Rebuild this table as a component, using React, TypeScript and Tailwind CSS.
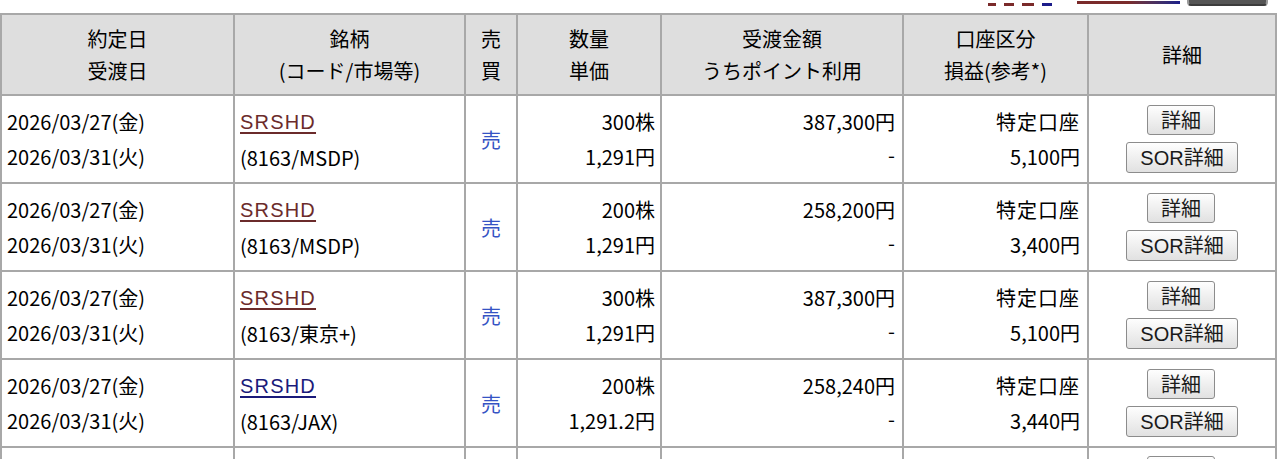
import React from 'react';

type Trade = {
  tradeDate: string;
  settleDate: string;
  name: string;
  visited: boolean;
  code: string;
  side: string;
  qty: string;
  price: string;
  amount: string;
  points: string;
  account: string;
  profit: string;
};

const TRADES: Trade[] = [
  { tradeDate: '2026/03/27(金)', settleDate: '2026/03/31(火)', name: 'SRSHD', visited: true, code: '(8163/MSDP)', side: '売', qty: '300株', price: '1,291円', amount: '387,300円', points: '-', account: '特定口座', profit: '5,100円' },
  { tradeDate: '2026/03/27(金)', settleDate: '2026/03/31(火)', name: 'SRSHD', visited: true, code: '(8163/MSDP)', side: '売', qty: '200株', price: '1,291円', amount: '258,200円', points: '-', account: '特定口座', profit: '3,400円' },
  { tradeDate: '2026/03/27(金)', settleDate: '2026/03/31(火)', name: 'SRSHD', visited: true, code: '(8163/東京+)', side: '売', qty: '300株', price: '1,291円', amount: '387,300円', points: '-', account: '特定口座', profit: '5,100円' },
  { tradeDate: '2026/03/27(金)', settleDate: '2026/03/31(火)', name: 'SRSHD', visited: false, code: '(8163/JAX)', side: '売', qty: '200株', price: '1,291.2円', amount: '258,240円', points: '-', account: '特定口座', profit: '3,440円' },
];

const cell = 'border-2 border-[#a8a8a8] align-middle';
const btn =
  'block mx-auto rounded-[3px] border border-[#8c8c8c] bg-gradient-to-b from-[#fefefe] to-[#e1e1e1] px-[13px] text-[20px] leading-none text-[#1a1a1a]';

const Buttons = () => (
  <div className="flex flex-col items-center gap-[7px]">
    <button className={`${btn} h-[30px] -translate-x-[1px]`}>詳細</button>
    <button className={`${btn} h-[31px] px-[12px]`}>
      <span className="font-['Liberation_Sans',sans-serif]">SOR</span>詳細
    </button>
  </div>
);

export default function App() {
  return (
    <div className="w-[1280px] h-[459px] overflow-hidden bg-white text-black font-['Noto_Sans_CJK_JP',sans-serif] text-[20px]">
      {/* pager and button cut off at the top edge */}
      <div className="h-[13px] overflow-hidden">
        <div className="flex items-end h-[6px] overflow-hidden">
          <div className="ml-[988px] w-[74px] flex gap-[8px] items-end">
            <span className="h-[3px] w-[8px] bg-[#7a2a2a]" />
            <span className="h-[3px] w-[10px] bg-[#7a2a2a]" />
            <span className="h-[3px] w-[12px] bg-[#7a2a2a]" />
            <span className="h-[3px] w-[10px] bg-[#1c1c8a]" />
          </div>
          <div className="ml-[15px] w-[103px] h-[3px] mb-[2px] bg-gradient-to-r from-[#7a2a2a] via-[#7a2a2a] to-[#1c1c8a]" />
          <div className="ml-[7px] w-[81px] h-[20px] rounded-[4px] border-2 border-[#9a9a9a] border-b-[#3c3c3c] bg-[#555]" />
        </div>
      </div>

      <table className="table-fixed border-collapse w-[1275px]">
        <colgroup>
          <col className="w-[233px]" />
          <col className="w-[231px]" />
          <col className="w-[52px]" />
          <col className="w-[144px]" />
          <col className="w-[242px]" />
          <col className="w-[185px]" />
          <col className="w-[188px]" />
        </colgroup>
        <thead>
          <tr className="h-[81px] bg-[#dedede] text-center leading-[32px]">
            <th className={`${cell} font-normal`}>
              <div>約定日</div>
              <div>受渡日</div>
            </th>
            <th className={`${cell} font-normal`}>
              <div>銘柄</div>
              <div>(コード/市場等)</div>
            </th>
            <th className={`${cell} font-normal`}>
              <div>売</div>
              <div>買</div>
            </th>
            <th className={`${cell} font-normal`}>
              <div>数量</div>
              <div>単価</div>
            </th>
            <th className={`${cell} font-normal`}>
              <div>受渡金額</div>
              <div>うちポイント利用</div>
            </th>
            <th className={`${cell} font-normal`}>
              <div>口座区分</div>
              <div>損益(参考*)</div>
            </th>
            <th className={`${cell} font-normal`}>詳細</th>
          </tr>
        </thead>
        <tbody>
          {TRADES.map((t, i) => (
            <tr key={i} className="h-[88px] leading-[35px]">
              <td className={`${cell} pl-[5px]`}>
                <div>{t.tradeDate}</div>
                <div>{t.settleDate}</div>
              </td>
              <td className={`${cell} pl-[5px]`}>
                <div>
                  <a
                    href="#"
                    className={`font-['Liberation_Sans',sans-serif] text-[20px] tracking-[1.2px] underline underline-offset-[3px] ${
                      t.visited ? 'text-[#6b2b2b]' : 'text-[#1a1a7a]'
                    }`}
                  >
                    {t.name}
                  </a>
                </div>
                <div>{t.code}</div>
              </td>
              <td className={`${cell} text-center text-[#3553c4]`}>{t.side}</td>
              <td className={`${cell} text-right pr-[5px]`}>
                <div>{t.qty}</div>
                <div>{t.price}</div>
              </td>
              <td className={`${cell} text-right pr-[7px]`}>
                <div>{t.amount}</div>
                <div className="leading-[31px] pb-[4px]">{t.points}</div>
              </td>
              <td className={`${cell} text-right pr-[7px]`}>
                <div className="tracking-[1px]">{t.account}</div>
                <div>{t.profit}</div>
              </td>
              <td className={cell}>
                <Buttons />
              </td>
            </tr>
          ))}
          {/* next row, only its first button's top edge shows */}
          <tr className="h-[88px]">
            <td className={cell} />
            <td className={cell} />
            <td className={cell} />
            <td className={cell} />
            <td className={cell} />
            <td className={cell} />
            <td className={`${cell} align-top pt-[8px]`}>
              <div className="mx-auto w-[68px] h-[30px] -translate-x-[1px] rounded-[3px] border border-[#8c8c8c] bg-gradient-to-b from-[#fefefe] to-[#e1e1e1]" />
            </td>
          </tr>
        </tbody>
      </table>
    </div>
  );
}
